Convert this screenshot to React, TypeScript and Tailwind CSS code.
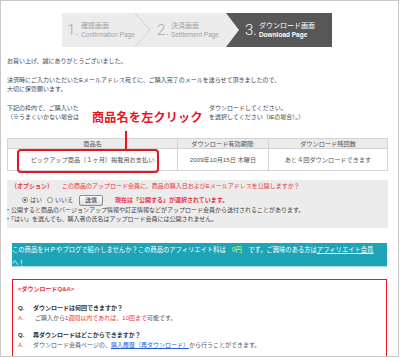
const Radio = ({ checked }: { checked?: boolean }) => (
  <span className="flex h-[6px] w-[6px] items-center justify-center rounded-full border border-[#8a8a8a] bg-white">
    {checked && <span className="h-[2.5px] w-[2.5px] rounded-full bg-[#333]" />}
  </span>
)

interface StepProps {
  n: number
  ja: string
  en: string
  active?: boolean
  width: string
}

const Step = ({ n, ja, en, active, width }: StepProps) => (
  <div className={`flex items-center gap-[2px] pl-[5px] ${width}`}>
    <span
      className={`font-['Roboto',sans-serif] text-[15px] font-light leading-none ${
        active ? 'text-white' : 'text-[#a9a9a9]'
      }`}
    >
      {n}.
    </span>
    <div className={`leading-[9px] ${active ? 'text-white' : 'text-[#a3a3a3]'}`}>
      <div className="text-[7px]">{ja}</div>
      <div className={`text-[6.5px] ${active ? 'font-bold' : ''}`}>{en}</div>
    </div>
  </div>
)

export default function App() {
  return (
    <div className="h-[358px] w-[400px] overflow-hidden bg-white font-['Liberation_Sans','Noto_Sans_CJK_JP',sans-serif] text-[6px] text-[#444]">
      <div className="relative h-[357px] w-[399px] overflow-hidden border border-[#c8c8c8] pl-[6px]">
        {/* steps */}
        <div className="relative ml-[55px] mt-[12px] flex h-[34px] w-[270px] bg-[#ececec]">
          <svg className="absolute inset-0" width="270" height="34" viewBox="0 0 270 34">
            <polyline points="73,0 88,17 73,34" fill="none" stroke="#d2d2d2" strokeWidth="1" />
            <polygon points="164,0 270,0 270,34 164,34 177,17" fill="#575757" />
          </svg>
          <div className="relative flex">
            <Step n={1} ja="確認画面" en="Confirmation Page" width="w-[90px]" />
            <Step n={2} ja="決済画面" en="Settlement Page" width="w-[88px]" />
            <Step n={3} ja="ダウンロード画面" en="Download Page" active width="w-[92px]" />
          </div>
        </div>

        {/* intro text */}
        <p className="mt-[10px] leading-[9px]">お買い上げ、誠にありがとうございました。</p>
        <p className="mt-[10px] leading-[9px]">
          決済時にご入力いただいたEメールアドレス宛てに、ご購入完了のメールを送らせて頂きましたので、
          <br />
          大切に保管願います。
        </p>
        <div className="mt-[10px] flex leading-[9px]">
          <div className="w-[202px]">
            <div>下記の枠内で、ご購入いた</div>
            <div>（※うまくいかない場合は</div>
          </div>
          <div>
            <div>ダウンロードしてください。</div>
            <div>を選択してください（IEの場合）。）</div>
          </div>
        </div>

        {/* callout annotation */}
        <div className="absolute left-[89px] top-[111px] bg-white px-[2px] text-[12px] font-bold leading-[13px] tracking-[0.3px] text-[#e8141e]">
          商品名を左クリック
        </div>
        <div className="absolute left-[124px] top-[130px] h-[18px] w-[2px] bg-[#e8141e]" />

        {/* table */}
        <table className="mt-[16px] w-[380px] table-fixed border-collapse text-center text-[6.2px] text-[#555]">
          <colgroup>
            <col className="w-[170px]" />
            <col className="w-[91px]" />
            <col className="w-[119px]" />
          </colgroup>
          <thead>
            <tr className="h-[10px] bg-[#ebebeb] leading-[9px]">
              <th className="border border-[#d4d4d4] font-normal">商品名</th>
              <th className="border border-[#d4d4d4] font-normal">ダウンロード有効期限:</th>
              <th className="border border-[#d4d4d4] font-normal">ダウンロード残回数</th>
            </tr>
          </thead>
          <tbody>
            <tr className="h-[22px] leading-[9px]">
              <td className="border border-[#d4d4d4]">ピックアップ商品（１ヶ月）掲載用お支払い</td>
              <td className="border border-[#d4d4d4]">2009年10月15日 木曜日</td>
              <td className="border border-[#d4d4d4]">あと４回ダウンロードできます</td>
            </tr>
          </tbody>
        </table>
        <div className="absolute left-[16px] top-[148px] h-[24px] w-[142px] rounded-[4px] border-2 border-[#e8141e]" />

        {/* option box */}
        <div className="mt-[9px] w-[381px] bg-[#ececec] pb-[4px] pl-[4px] pt-[1.5px] leading-[9px]">
          <div className="flex text-[#e8323a]">
            <span className="font-bold">（オプション）</span>
            <span className="ml-[9px]">この商品のアップロード会員に、商品の購入日およびEメールアドレスを公開しますか？</span>
          </div>
          <div className="ml-[11px] mt-[3.5px] flex h-[12px] items-center">
            <Radio checked />
            <span className="ml-[2px]">はい</span>
            <span className="ml-[5px]">
              <Radio />
            </span>
            <span className="ml-[2px]">いいえ</span>
            <span className="ml-[6px] flex h-[11px] w-[24px] items-center justify-center rounded-[2px] border border-[#8c8c8c] bg-gradient-to-b from-white to-[#dcdcdc] text-[#333]">
              送信
            </span>
            <span className="ml-[12px] font-bold text-[#e8323a]">現在は「公開する」が選択されています。</span>
          </div>
          <div className="-ml-[6px]">・公開すると商品のバージョンアップ情報や訂正情報などがアップロード会員から送付されることがあります。</div>
          <div className="-ml-[6px]">・「はい」を選んでも、購入者の氏名はアップロード会員には公開されません。</div>
        </div>

        {/* affiliate box */}
        <div className="ml-[5px] mt-[15px] h-[24px] w-[375px] border-b border-[#a6dde6] bg-[#1ea4b7] text-[6.3px] leading-[13px] text-white">
          <div className="whitespace-nowrap">
            　この商品をＨＰやブログで紹介しませんか？この商品のアフィリエイト料は　<span className="text-[#f4f56a]">0円</span>　です。ご興味のある方は
            <span className="underline">アフィリエイト会員</span>
          </div>
          <div>へ！</div>
        </div>

        {/* Q&A */}
        <div className="ml-[5px] mt-[12px] h-[120px] w-[375px] border border-[#f0141e] pl-[5px] pt-[4px] leading-[10px]">
          <div className="font-bold text-[#f0323a]">&lt;ダウンロードQ&amp;A&gt;</div>
          <div className="mt-[9px] flex font-bold text-[#333]">
            <span className="w-[15px]">Q.</span>
            <span>ダウンロードは何回できますか？</span>
          </div>
          <div className="flex text-[#555]">
            <span className="w-[17px] text-[#e0503a]">A.</span>
            <span>
              ご購入から<span className="text-[#f0323a]">1週間以内であれば、10回まで</span>可能です。
            </span>
          </div>
          <div className="mt-[7px] flex font-bold text-[#333]">
            <span className="w-[15px]">Q.</span>
            <span>再ダウンロードはどこからできますか？</span>
          </div>
          <div className="flex text-[#555]">
            <span className="w-[15px] text-[#e0503a]">A.</span>
            <span>
              ダウンロード会員ページの、
              <span className="text-[#2a5bd7] underline">購入履歴（再ダウンロード）</span>
              から行うことができます。
            </span>
          </div>
        </div>
      </div>
    </div>
  )
}
